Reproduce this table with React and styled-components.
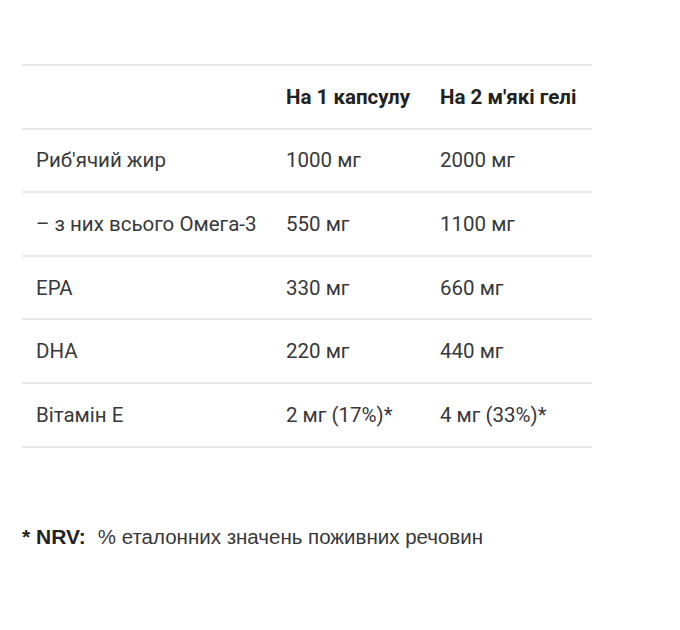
import React from "react";
import styled, { createGlobalStyle } from "styled-components";

const Global = createGlobalStyle`
  html, body { margin: 0; padding: 0; background: #fff; }
  body { font-family: Roboto, "Liberation Sans", sans-serif; }
`;

const Page = styled.div`
  padding: 64px 0 0 22px;
  width: 680px;
  height: 630px;
  box-sizing: border-box;
`;

const Table = styled.table`
  width: 570px;
  border-collapse: collapse;
  border-top: 2px solid #ebebeb;
  font-family: Roboto, sans-serif;
  font-size: 20.5px;
  color: #333;
`;

const Row = styled.tr`
  height: 63.6px;
  border-bottom: 2px solid #ebebeb;
`;

const Cell = styled.td`
  padding: 0 0 0 14px;
  width: ${(p) => p.$w}px;
  font-weight: ${(p) => (p.$head ? 700 : 400)};
  color: ${(p) => (p.$head ? "#222" : "#383838")};
  vertical-align: middle;
  white-space: nowrap;
  box-sizing: border-box;
`;

const Note = styled.p`
  margin: 77px 0 0 0;
  font-family: "Liberation Sans", Arial, sans-serif;
  font-size: 20.5px;
  color: #383838;
`;

const NoteLabel = styled.b`
  color: #222;
  margin-right: 12px;
  font-size: 21px;
`;

const widths = [250, 154, 166];

const rows = [
  ["Риб'ячий жир", "1000 мг", "2000 мг"],
  ["– з них всього Омега-3", "550 мг", "1100 мг"],
  ["EPA", "330 мг", "660 мг"],
  ["DHA", "220 мг", "440 мг"],
  ["Вітамін Е", "2 мг (17%)*", "4 мг (33%)*"],
];

export default function App() {
  return (
    <>
      <Global />
      <Page>
        <Table>
          <tbody>
            <Row>
              <Cell $w={widths[0]} />
              <Cell $w={widths[1]} $head>На 1 капсулу</Cell>
              <Cell $w={widths[2]} $head>На 2 м'які гелі</Cell>
            </Row>
            {rows.map((r, i) => (
              <Row key={i}>
                {r.map((c, j) => (
                  <Cell key={j} $w={widths[j]}>{c}</Cell>
                ))}
              </Row>
            ))}
          </tbody>
        </Table>
        <Note>
          <NoteLabel>* NRV:</NoteLabel>% еталонних значень поживних речовин
        </Note>
      </Page>
    </>
  );
}
